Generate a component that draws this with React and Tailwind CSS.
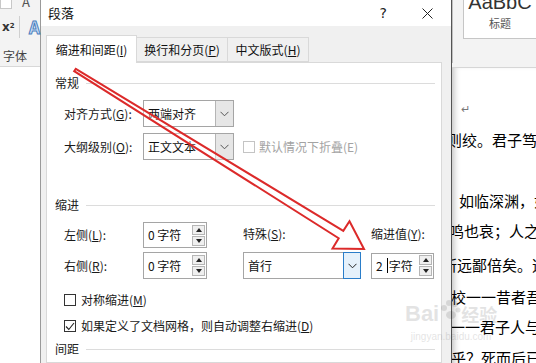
import React from "react";

const Chevron = ({ color = "#444" }) => (
  <svg width="9" height="6" viewBox="0 0 9 6">
    <polyline points="0.5,0.8 4.5,4.8 8.5,0.8" fill="none" stroke={color} strokeWidth="1" />
  </svg>
);

const SpinButtons = () => (
  <div className="flex flex-col gap-[1px] mr-[1px]">
    <div className="w-[13px] h-[10px] border border-[#b5b5b5] bg-[#efefef] flex items-center justify-center">
      <svg width="6" height="4" viewBox="0 0 6 4"><polygon points="0,4 3,0 6,4" fill="#222" /></svg>
    </div>
    <div className="w-[13px] h-[10px] border border-[#b5b5b5] bg-[#efefef] flex items-center justify-center">
      <svg width="6" height="4" viewBox="0 0 6 4"><polygon points="0,0 6,0 3,4" fill="#222" /></svg>
    </div>
  </div>
);

const Spinbox = ({ value, width, caret }) => (
  <div className={`${width} h-full border border-[#a5a5a5] bg-white flex items-center justify-between pl-[4px]`}>
    <span className="text-[12px] text-[#111] flex items-center">
      {caret ? (
        <>
          2<span className="inline-block w-px h-[15px] bg-black ml-[4px] mr-[1px]" />字符
        </>
      ) : (
        value
      )}
    </span>
    <SpinButtons />
  </div>
);

const Select = ({ value, width, hover }) => (
  <div className={`${width} h-full border border-[#a5a5a5] bg-white flex items-stretch`}>
    <span className="flex-1 flex items-center pl-[4px] text-[12px] text-[#111]">{value}</span>
    <div
      className={
        hover
          ? "w-[18px] bg-[#e5f1fb] border border-[#2a7dc9] -my-px -mr-px flex items-center justify-center"
          : "w-[18px] bg-[#e6e6e6] border-l border-[#b5b5b5] flex items-center justify-center"
      }
    >
      <Chevron color={hover ? "#222" : "#555"} />
    </div>
  </div>
);

const Heading = ({ text, className }) => (
  <div className={`h-[16px] flex items-center pl-[8px] pr-[6px] ${className}`}>
    <span className="text-[12px] text-[#222]">{text}</span>
    <div className="flex-1 h-px bg-[#dcdcdc] ml-[7px]" />
  </div>
);

const Check = ({ checked, disabled }) => (
  <div
    className={`w-[12px] h-[12px] border bg-white flex items-center justify-center ${
      disabled ? "border-[#c4c4c4]" : "border-[#333]"
    }`}
  >
    {checked && (
      <svg width="10" height="9" viewBox="0 0 10 9">
        <polyline points="1,4.5 3.8,7.5 9,1" fill="none" stroke="#222" strokeWidth="1.1" />
      </svg>
    )}
  </div>
);

const Label = ({ children, className = "" }) => (
  <span className={`text-[12px] text-[#1a1a1a] ${className}`}>{children}</span>
);

const docLines = [
  { text: "↵", mt: "mt-[25px]", ml: "ml-[9px]", cls: "text-[11px] text-[#777]" },
  { text: "则绞。君子笃", mt: "mt-[2px]", ml: "ml-[-5px]" },
  { text: "，如临深渊，如", mt: "mt-[31px]", ml: "ml-[-8px]" },
  { text: "鸣也哀；人之", mt: "mt-0", ml: "ml-[-3px]" },
  { text: "所远鄙倍矣。逆", mt: "mt-[4px]", ml: "ml-[-10px]" },
  { text: "校一一昔者吾", mt: "mt-[2px]", ml: "ml-[-1px]" },
  { text: "一一君子人与", mt: "mt-0", ml: "ml-[-2px]" },
  { text: "乎？死而后已", mt: "mt-[1px]", ml: "ml-[-1px]" },
];

export default function App() {
  return (
    <div className="relative w-[536px] h-[363px] overflow-hidden flex bg-white font-['Noto_Sans_CJK_SC','Noto_Sans',sans-serif]">
      {/* word ribbon behind, left */}
      <div className="w-[40px] shrink-0 flex flex-col">
        <div className="h-[67px] bg-[#f3f3f3] border-b border-[#d8d8d8] relative">
          <div className="flex h-[9px]">
            <div className="w-[12px] h-[9px] bg-white border border-t-0 border-[#c8c8c8]" />
            <span className="ml-[10px] -mt-[8px] text-[13px] text-[#555]">A</span>
          </div>
          <div className="flex items-center h-[18px] mt-[9px]">
            <span className="ml-[2px] text-[12px] font-bold text-[#333] font-['DejaVu_Sans',sans-serif]">
              x<sup className="text-[7px]">2</sup>
            </span>
            <div className="w-px h-[22px] bg-[#d0d0d0] ml-[4px]" />
            <span className="ml-[10px] text-[17px] font-bold text-[#cfe0f5] [-webkit-text-stroke:1px_#4a7fc0]">A</span>
          </div>
          <div className="mt-[11px] ml-[3px] text-[12px] text-[#444]">字体</div>
        </div>
      </div>

      {/* dialog */}
      <div className="w-[412px] shrink-0 flex flex-col border-l border-[#9a9a9a] border-r border-r-[#555] bg-[#f0f0f0]">
        <div className="h-[26px] bg-white flex items-center shrink-0">
          <span className="ml-[7px] text-[13px] text-[#111]">段落</span>
          <span className="ml-auto mr-[35px] text-[14px] text-[#222] font-['DejaVu_Sans',sans-serif]">?</span>
          <svg width="11" height="11" viewBox="0 0 11 11" className="mr-[18px]">
            <path d="M0.5 0.5 L10.5 10.5 M10.5 0.5 L0.5 10.5" stroke="#222" strokeWidth="1" />
          </svg>
        </div>
        <div className="flex-1 flex flex-col pt-[9px] pl-[5px] pr-[9px]">
          <div className="flex items-end h-[27px]">
            <div className="w-[91px] h-[28px] -mb-px bg-white border border-b-0 border-[#d9d9d9] flex items-center justify-center text-[12px] text-[#111] relative z-10">
              缩进和间距(<u>I</u>)
            </div>
            <div className="w-[91px] h-[25px] border border-l-0 border-[#d9d9d9] flex items-center justify-center text-[12px] text-[#111]">
              换行和分页(<u>P</u>)
            </div>
            <div className="w-[81px] h-[25px] border border-l-0 border-[#d9d9d9] flex items-center justify-center text-[12px] text-[#111]">
              中文版式(<u>H</u>)
            </div>
          </div>
          <div className="flex-1 bg-white border border-[#d9d9d9] flex flex-col">
            <Heading text="常规" className="mt-[12px]" />
            <div className="h-[27px] mt-[9px] flex items-center pl-[17px]">
              <Label className="w-[79px]">对齐方式(<u>G</u>):</Label>
              <Select value="两端对齐" width="w-[91px]" />
            </div>
            <div className="h-[27px] mt-[6px] flex items-center pl-[17px]">
              <Label className="w-[79px]">大纲级别(<u>O</u>):</Label>
              <Select value="正文文本" width="w-[91px]" />
              <div className="ml-[9px]"><Check disabled /></div>
              <span className="ml-[4px] text-[12px] text-[#a3a3a3]">默认情况下折叠(E)</span>
            </div>
            <Heading text="缩进" className="mt-[37px]" />
            <div className="h-[26px] mt-[9px] flex items-center pl-[17px]">
              <Label className="w-[79px]">左侧(<u>L</u>):</Label>
              <Spinbox value="0 字符" width="w-[64px]" />
              <Label className="ml-[36px] w-[118px] -mt-[2px]">特殊(<u>S</u>):</Label>
              <Label className="ml-[10px] -mt-[3px]">缩进值(<u>Y</u>):</Label>
            </div>
            <div className="h-[27px] mt-[4px] flex items-center pl-[17px]">
              <Label className="w-[79px]">右侧(<u>R</u>):</Label>
              <Spinbox value="0 字符" width="w-[64px]" />
              <div className="ml-[36px] h-full"><Select value="首行" width="w-[118px]" hover /></div>
              <div className="ml-[10px] h-[26px]"><Spinbox caret width="w-[63px]" /></div>
            </div>
            <div className="h-[16px] mt-[13px] flex items-center pl-[17px]">
              <Check />
              <Label className="ml-[5px]">对称缩进(<u>M</u>)</Label>
            </div>
            <div className="h-[16px] mt-[10px] flex items-center pl-[17px]">
              <Check checked />
              <Label className="ml-[5px]">如果定义了文档网格，则自动调整右缩进(<u>D</u>)</Label>
            </div>
            <Heading text="间距" className="mt-[7px]" />
          </div>
        </div>
      </div>

      {/* document behind, right */}
      <div className="flex-1 flex flex-col overflow-hidden">
        <div className="h-[68px] bg-[#f3f3f3] border-b border-[#d6d6d6] flex shrink-0">
          <div className="w-px h-[63px] bg-[#c0c0c0]" />
          <div className="ml-[10px] flex-1 h-[39px] bg-white border-l border-b border-[#c6c6c6] flex flex-col items-center overflow-hidden">
            <span className="-mt-[10px] text-[20px] leading-[24px] text-[#333] font-['Liberation_Sans',sans-serif] whitespace-nowrap">AaBbC</span>
            <span className="text-[11px] text-[#555] leading-[14px] mt-[2px]">标题</span>
          </div>
        </div>
        <div className="flex-1 flex flex-col bg-white shadow-[inset_6px_0_6px_-4px_rgba(0,0,0,0.25)]">
          {docLines.map((l, i) => (
            <div
              key={i}
              className={`h-[30px] flex items-center whitespace-nowrap ${l.mt} ${l.ml} ${l.cls || "text-[15px] text-black"}`}
            >
              {l.text}
            </div>
          ))}
        </div>
      </div>

      {/* watermark */}
      <div className="absolute left-[405px] top-[303px] flex flex-col items-center pointer-events-none opacity-[0.13]">
        <div className="flex items-center">
          <span className="text-[22px] font-bold text-[#333] font-['Liberation_Sans',sans-serif] leading-none">Bai</span>
          <svg width="22" height="20" viewBox="0 0 22 20" className="-mt-[8px]">
            <circle cx="5" cy="8" r="3" fill="#333" />
            <circle cx="10" cy="3" r="3" fill="#333" />
            <circle cx="16" cy="4" r="3" fill="#333" />
            <circle cx="19" cy="10" r="2.5" fill="#333" />
            <ellipse cx="12" cy="15" rx="5" ry="4" fill="#333" />
          </svg>
          <span className="text-[18px] font-bold text-[#333] leading-none">经验</span>
        </div>
        <span className="text-[10px] text-[#333] font-['Liberation_Sans',sans-serif] mt-[4px]">jingyan.baidu.com</span>
      </div>

      {/* red annotation arrow */}
      <svg className="absolute inset-0 pointer-events-none" width="536" height="363" viewBox="0 0 536 363">
        <polygon
          points="75.8,68.9 343.3,230.8 349.5,221.3 364,249 332.5,248.6 338.7,238.2 74.2,71.1"
          fill="rgba(255,255,255,0.35)"
          stroke="#dc2a2a"
          strokeWidth="2"
          strokeLinejoin="miter"
        />
      </svg>
    </div>
  );
}
